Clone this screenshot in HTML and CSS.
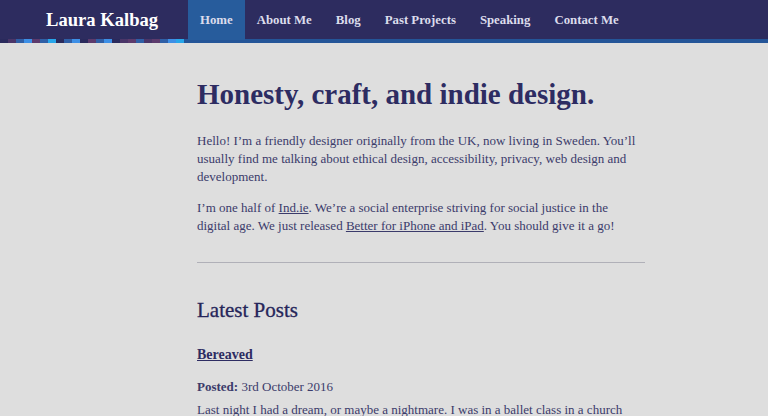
FILE: index.html
```html
<!DOCTYPE html>
<html lang="en">
<head>
<meta charset="utf-8">
<title>Laura Kalbag</title>
<link rel="stylesheet" href="styles.css">
</head>
<body>
<header class="site-header">
  <div class="bar">
    <a class="logo" href="#">Laura Kalbag</a>
    <nav class="nav">
      <a class="nav-item active" href="#">Home</a>
      <a class="nav-item" href="#">About Me</a>
      <a class="nav-item" href="#">Blog</a>
      <a class="nav-item" href="#">Past Projects</a>
      <a class="nav-item" href="#">Speaking</a>
      <a class="nav-item" href="#">Contact Me</a>
    </nav>
  </div>
  <div class="stripe">
    <div class="pixels">
      <span class="c1"></span><span class="c2"></span><span class="c3"></span><span class="c4"></span><span class="c5"></span><span class="c3"></span><span class="c6"></span><span class="c1"></span><span class="c3"></span><span class="c4"></span><span class="c1"></span><span class="c5"></span><span class="c3"></span><span class="c4"></span><span class="c1"></span><span class="c2"></span><span class="c5"></span><span class="c3"></span><span class="c2"></span><span class="c5"></span><span class="c3"></span><span class="c4"></span><span class="c6"></span>
    </div>
  </div>
</header>
<div class="page">
<main class="content">
  <h1 class="title">Honesty, craft, and indie design.</h1>
  <p>Hello! I’m a friendly designer originally from the UK, now living in Sweden. You’ll usually find me talking about ethical design, accessibility, privacy, web design and development.</p>
  <p>I’m one half of <a href="#">Ind.ie</a>. We’re a social enterprise striving for social justice in the digital age. We just released <a href="#">Better for iPhone and iPad</a>. You should give it a go!</p>
  <hr class="rule">
  <h2 class="section-title">Latest Posts</h2>
  <h3 class="post-title"><a href="#">Bereaved</a></h3>
  <p class="meta"><strong>Posted:</strong> 3rd October 2016</p>
  <p>Last night I had a dream, or maybe a nightmare. I was in a ballet class in a church hall with lots of other people.</p>
</main>
</div>
</body>
</html>
```

FILE: styles.css
```css
* { box-sizing: border-box; }
html, body { margin: 0; padding: 0; }
body {
  background: #dedede;
  color: #3b3b6b;
  font-family: "Liberation Serif", "Times New Roman", serif;
  font-size: 13px;
  line-height: 18px;
}
a { color: inherit; }

.site-header { background: #2d2c5f; }
.bar {
  display: flex;
  align-items: stretch;
  height: 39px;
  padding-left: 46px;
}
.logo {
  color: #ffffff;
  text-decoration: none;
  font-weight: bold;
  font-size: 18.6px;
  line-height: 40px;
  width: 142px;
}
.nav { display: flex; }
.nav-item {
  color: #dcdcec;
  text-decoration: none;
  font-weight: bold;
  font-size: 12.8px;
  line-height: 40px;
  height: 40px;
  padding: 0 12px;
}
.nav-item.active { background: #275c9c; }
.stripe {
  height: 4px;
  background: #245598;
  display: flex;
}
.pixels { display: flex; width: 184px; }
.pixels span { flex: 1; height: 4px; }
.c1 { background: #2a2a5c; }
.c2 { background: #4a3568; }
.c3 { background: #2f5fa6; }
.c4 { background: #3d8fe6; }
.c5 { background: #5c3a6c; }
.c6 { background: #27a6ea; }

.page { padding-left: 197px; }
.content {
  width: 448px;
  padding-top: 31px;
}
.title {
  margin: 0 0 18px;
  color: #2d2c62;
  font-size: 29px;
  line-height: 40px;
  font-weight: bold;
}
.content p { margin: 0 0 13px; max-width: 441px; }
.rule {
  border: 0;
  border-top: 1px solid #b0b0b8;
  margin: 27px 0 33px;
}
.section-title {
  margin: 0 0 22px;
  font-size: 21px;
  line-height: 28px;
  color: #26265a;
  font-weight: normal;
  -webkit-text-stroke: 0.3px #26265a;
}
.post-title {
  margin: 0 0 14px;
  font-size: 14px;
  line-height: 18px;
  color: #2d2c62;
}
.content p.meta { font-size: 13px; margin-bottom: 5px; }
```
